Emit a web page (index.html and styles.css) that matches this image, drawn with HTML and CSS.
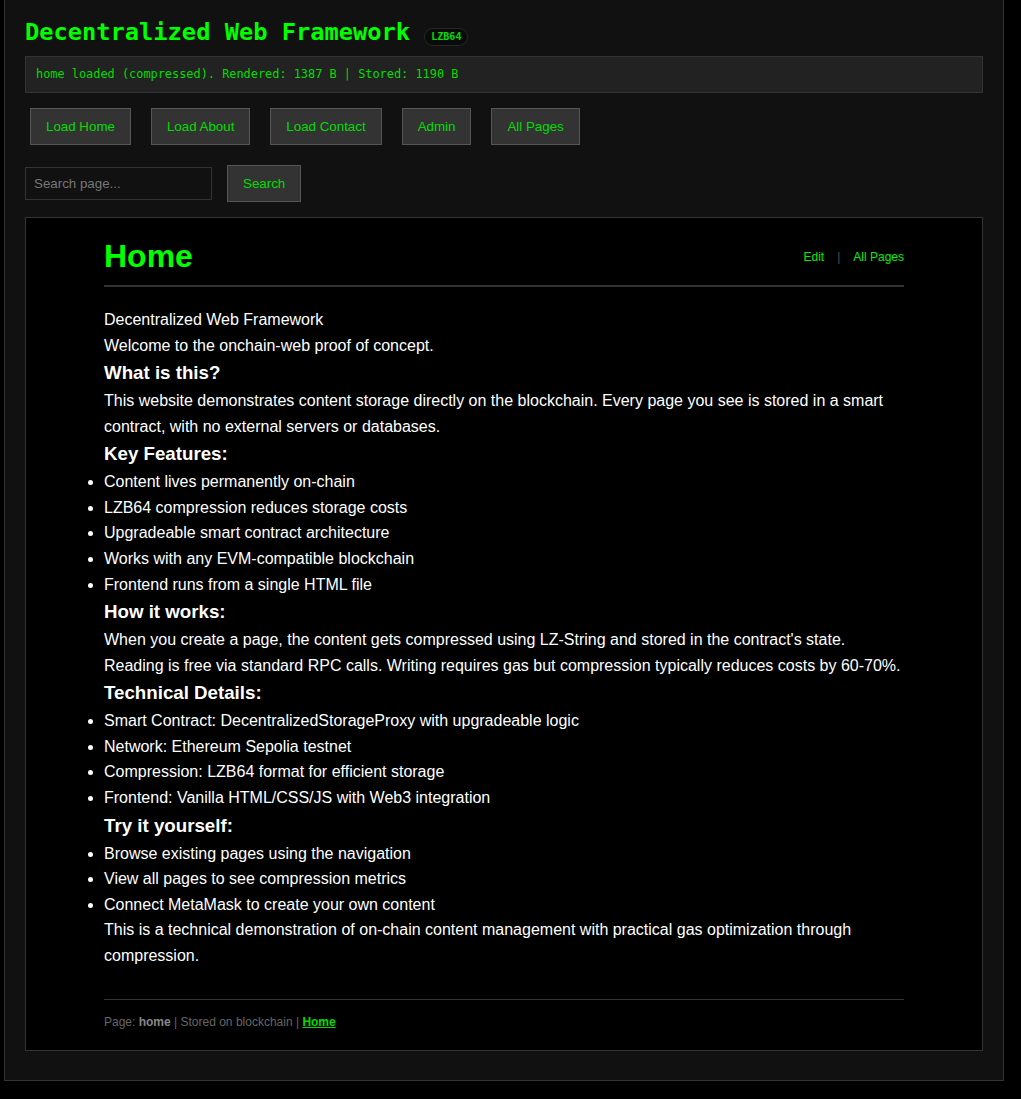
FILE: index.html
```html
<!DOCTYPE html>
<html lang="en">
<head>
<meta charset="utf-8">
<title>Decentralized Web Framework</title>
<link rel="stylesheet" href="styles.css">
</head>
<body>
<div class="page">
  <h1 class="site-title">Decentralized Web Framework <span class="badge">LZB64</span></h1>
  <div class="status">home loaded (compressed). Rendered: 1387 B | Stored: 1190 B</div>
  <nav class="nav">
    <button class="btn">Load Home</button>
    <button class="btn">Load About</button>
    <button class="btn">Load Contact</button>
    <button class="btn">Admin</button>
    <button class="btn">All Pages</button>
  </nav>
  <div class="search">
    <input class="search-input" type="text" placeholder="Search page...">
    <button class="btn">Search</button>
  </div>
  <div class="content">
    <div class="article">
      <div class="page-header">
        <h1 class="page-title">Home</h1>
        <div class="actions"><a href="#">Edit</a><span class="sep">|</span><a href="#">All Pages</a></div>
      </div>
      <div class="body">
        <p>Decentralized Web Framework</p>
        <p>Welcome to the onchain-web proof of concept.</p>
        <h3>What is this?</h3>
        <p>This website demonstrates content storage directly on the blockchain. Every page you see is stored in a smart contract, with no external servers or databases.</p>
        <h3>Key Features:</h3>
        <ul>
          <li>Content lives permanently on-chain</li>
          <li>LZB64 compression reduces storage costs</li>
          <li>Upgradeable smart contract architecture</li>
          <li>Works with any EVM-compatible blockchain</li>
          <li>Frontend runs from a single HTML file</li>
        </ul>
        <h3>How it works:</h3>
        <p>When you create a page, the content gets compressed using LZ-String and stored in the contract's state. Reading is free via standard RPC calls. Writing requires gas but compression typically reduces costs by 60-70%.</p>
        <h3>Technical Details:</h3>
        <ul>
          <li>Smart Contract: DecentralizedStorageProxy with upgradeable logic</li>
          <li>Network: Ethereum Sepolia testnet</li>
          <li>Compression: LZB64 format for efficient storage</li>
          <li>Frontend: Vanilla HTML/CSS/JS with Web3 integration</li>
        </ul>
        <h3>Try it yourself:</h3>
        <ul>
          <li>Browse existing pages using the navigation</li>
          <li>View all pages to see compression metrics</li>
          <li>Connect MetaMask to create your own content</li>
        </ul>
        <p>This is a technical demonstration of on-chain content management with practical gas optimization through compression.</p>
      </div>
      <div class="footer">Page: <strong>home</strong> | Stored on blockchain | <a href="#">Home</a></div>
    </div>
  </div>
</div>
</body>
</html>
```

FILE: styles.css
```css
body {
  margin: 0;
  background: #000;
  font-family: "Liberation Sans", Arial, sans-serif;
}

.page {
  width: 1000px;
  box-sizing: border-box;
  margin-left: 4px;
  background: #111;
  border: 1px solid #333;
  border-top: none;
  padding: 18px 20px 29px;
}

.site-title {
  margin: 0 0 10px;
  font: bold 23.7px/28px "DejaVu Sans Mono", "Liberation Mono", monospace;
  color: #00ff00;
}

.badge {
  display: inline-block;
  padding: 2px 6px;
  font: bold 10px/12px "DejaVu Sans Mono", "Liberation Mono", monospace;
  color: #00dd00;
  background: #0a0a0a;
  border: 1px solid #262626;
  border-radius: 10px;
}

.status {
  background: #222;
  border: 1px solid #333;
  padding: 10px;
  font: 11.9px/15px "DejaVu Sans Mono", "Liberation Mono", monospace;
  color: #00dd00;
}

.nav {
  display: flex;
  gap: 20px;
  padding-left: 5px;
  margin-top: 15px;
}

.btn {
  background: #333;
  border: 1px solid #555;
  color: #00dd00;
  font: 13.333px/15px "Liberation Sans", Arial, sans-serif;
  padding: 10px 15px;
  margin: 0;
}

.search {
  display: flex;
  align-items: center;
  gap: 15px;
  margin-top: 20px;
}

.search-input {
  width: 187px;
  height: 33px;
  box-sizing: border-box;
  margin: 0;
  padding: 0 8px;
  background: #111;
  border: 1px solid #333;
  color: #ccc;
  font: 13.333px "Liberation Sans", Arial, sans-serif;
}

.search-input::placeholder {
  color: #777;
}

.content {
  margin-top: 15px;
  background: #000;
  border: 1px solid #333;
  padding: 20px 20px 18px;
}

.article {
  max-width: 800px;
  margin: 0 auto;
}

.page-header {
  display: flex;
  justify-content: space-between;
  align-items: center;
  padding-bottom: 10px;
  border-bottom: 2px solid #333;
  margin-bottom: 20px;
}

.page-title {
  margin: 0;
  font-size: 32px;
  font-weight: bold;
  color: #00ff00;
}

.actions {
  font-size: 12px;
}

.actions a {
  color: #00ee00;
  text-decoration: none;
}

.sep {
  color: #445555;
  margin: 0 13px;
}

.body {
  color: #fff;
  font-size: 16px;
  line-height: 1.6;
}

.body p,
.body ul,
.body h3 {
  margin: 0;
}

.body h3 {
  font-size: 1.17em;
}

.body ul {
  padding-left: 0;
}

.footer {
  margin-top: 30px;
  padding-top: 13px;
  border-top: 1px solid #333;
  font-size: 12px;
  line-height: 19px;
  color: #666;
}

.footer strong {
  color: #888;
}

.footer a {
  color: #00dd00;
  font-weight: bold;
}
```
